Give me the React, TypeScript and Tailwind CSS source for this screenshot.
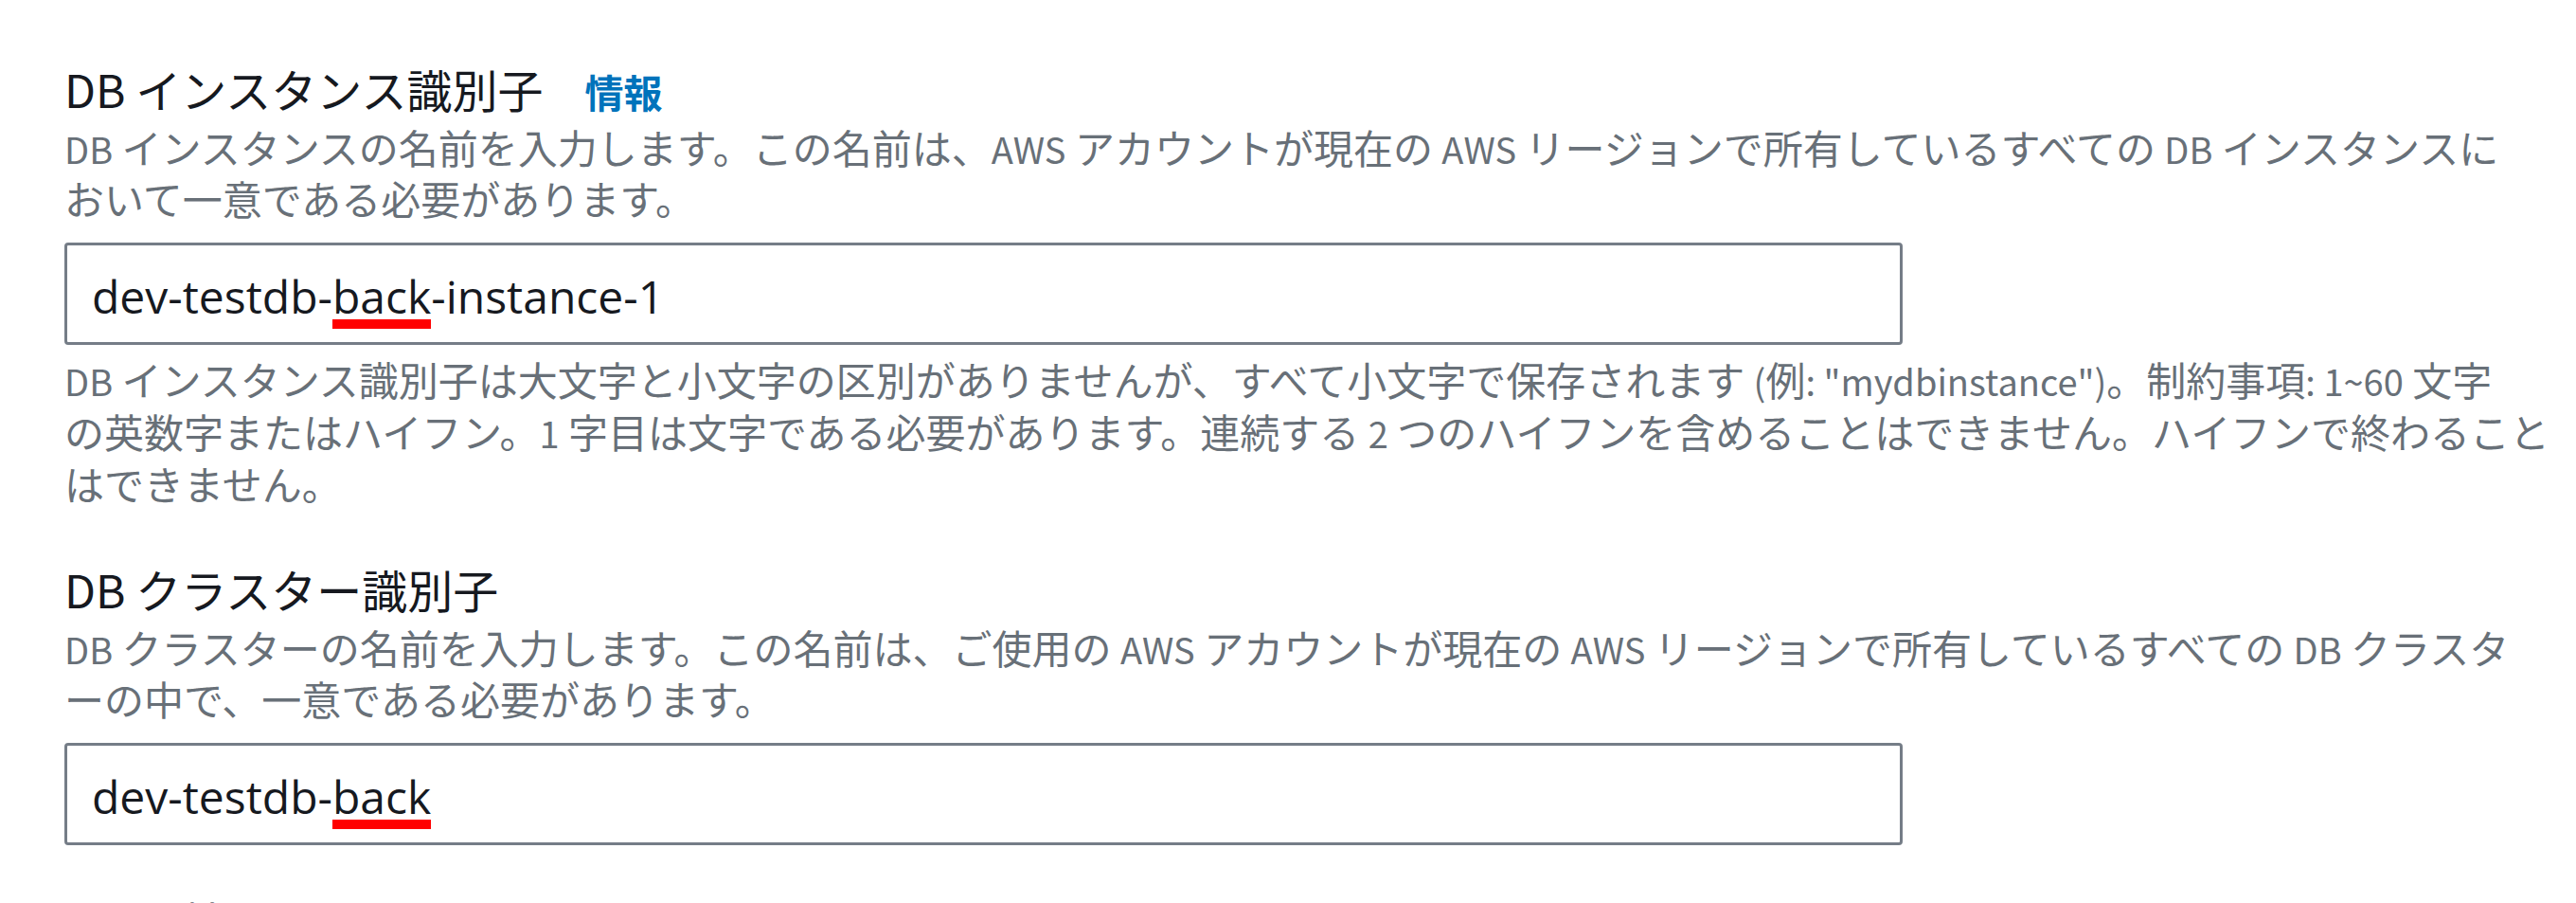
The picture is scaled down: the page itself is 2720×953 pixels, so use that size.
import React from 'react';

const descCls = "text-[42px] leading-[54px] text-[#687078] whitespace-nowrap";
const labelCls = "flex h-[64px] items-baseline text-[48px] leading-[64px] text-[#16191f] whitespace-nowrap";

// latin runs inside the japanese help text render a bit smaller
function E({ children }: { children: React.ReactNode }) {
  return <span className="text-[38px] leading-none">{children}</span>;
}

function Marked({ children }: { children: React.ReactNode }) {
  // red annotation bar drawn under part of the value
  return (
    <span className="relative">
      {children}
      <span className="absolute left-0 right-0 top-[57px] h-[10px] bg-[#ff0000]" />
    </span>
  );
}

function ValueBox({ before, marked, after }: { before: string; marked: string; after?: string }) {
  return (
    <div className="flex h-[108px] w-[1941px] items-center rounded-[4px] border-[3px] border-[#757d87] bg-white pl-[26px] pt-[6px] font-['Open_Sans',sans-serif] text-[48px] leading-[96px] text-[#16191f]">
      <span className="whitespace-nowrap">
        {before}
        <Marked>{marked}</Marked>
        {after}
      </span>
    </div>
  );
}

export default function App() {
  return (
    <div className="h-[953px] w-[2720px] overflow-hidden bg-white pl-[68px] pt-[61px] font-['Noto_Sans_CJK_JP','Noto_Sans',sans-serif]">
      {/* DB instance identifier */}
      <div className={labelCls}>
        <span>DB インスタンス識別子</span>
        <a className="ml-[44px] text-[41px] font-bold text-[#0073bb]">情報</a>
      </div>
      <p className={`mt-[3px] ${descCls}`}>
        <E>DB</E> インスタンスの名前を入力します。この名前は、<E>AWS</E> アカウントが現在の <E>AWS</E> リージョンで所有しているすべての <E>DB</E> インスタンスに
        <br />
        おいて一意である必要があります。
      </p>
      <div className="mt-[20px]">
        <ValueBox before="dev-testdb-" marked="back" after="-instance-1" />
      </div>
      <p className={`mt-[8px] ${descCls} leading-[55px]`}>
        <E>DB</E> インスタンス識別子は大文字と小文字の区別がありませんが、すべて小文字で保存されます <E>(</E>例<E>: "mydbinstance")</E>。制約事項<E>: 1~60</E> 文字
        <br />
        の英数字またはハイフン。<E>1</E> 字目は文字である必要があります。連続する <E>2</E> つのハイフンを含めることはできません。ハイフンで終わること
        <br />
        はできません。
      </p>

      {/* DB cluster identifier */}
      <div className={`mt-[52px] ${labelCls}`}>
        <span>DB クラスター識別子</span>
      </div>
      <p className={`mt-[3px] ${descCls}`}>
        <E>DB</E> クラスターの名前を入力します。この名前は、ご使用の <E>AWS</E> アカウントが現在の <E>AWS</E> リージョンで所有しているすべての <E>DB</E> クラスタ
        <br />
        ーの中で、一意である必要があります。
      </p>
      <div className="mt-[20px]">
        <ValueBox before="dev-testdb-" marked="back" />
      </div>

      <div className={`mt-[48px] pl-[30px] ${labelCls}`}>
        <span>認証情報の設定</span>
      </div>
    </div>
  );
}
